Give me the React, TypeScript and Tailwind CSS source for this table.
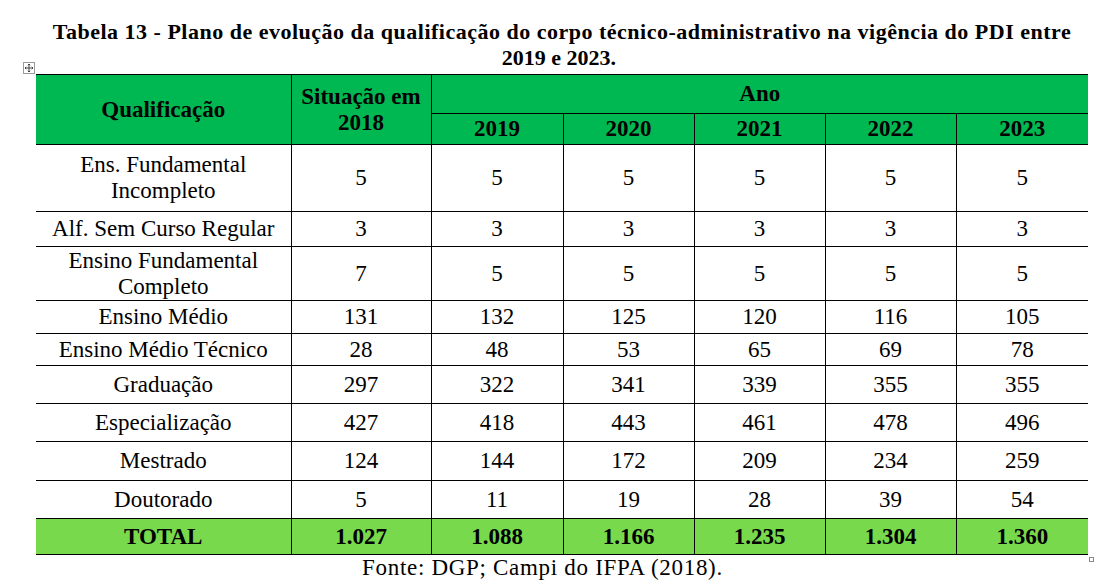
const rows: { label: string[]; values: number[]; h: string }[] = [
  { label: ["Ens. Fundamental", "Incompleto"], values: [5, 5, 5, 5, 5, 5], h: "h-[67px]" },
  { label: ["Alf. Sem Curso Regular"], values: [3, 3, 3, 3, 3, 3], h: "h-[35px]" },
  { label: ["Ensino Fundamental", "Completo"], values: [7, 5, 5, 5, 5, 5], h: "h-[54px]" },
  { label: ["Ensino Médio"], values: [131, 132, 125, 120, 116, 105], h: "h-[33px]" },
  { label: ["Ensino Médio Técnico"], values: [28, 48, 53, 65, 69, 78], h: "h-[32px]" },
  { label: ["Graduação"], values: [297, 322, 341, 339, 355, 355], h: "h-[38px]" },
  { label: ["Especialização"], values: [427, 418, 443, 461, 478, 496], h: "h-[38px]" },
  { label: ["Mestrado"], values: [124, 144, 172, 209, 234, 259], h: "h-[39px]" },
  { label: ["Doutorado"], values: [5, 11, 19, 28, 39, 54], h: "h-[38px]" },
];

const totals = ["1.027", "1.088", "1.166", "1.235", "1.304", "1.360"];
const years = [2019, 2020, 2021, 2022, 2023];

function MoveHandle() {
  return (
    <span className="absolute left-[-13px] top-[-12px] inline-grid h-[12px] w-[12px] place-items-center border border-[#9a9a9a] bg-white">
      <svg width="10" height="10" viewBox="0 0 10 10" fill="none" stroke="#333" strokeWidth="0.9">
        <path d="M5 1v8M1 5h8" />
        <path d="M3.8 2.2L5 1l1.2 1.2M3.8 7.8L5 9l1.2-1.2M2.2 3.8L1 5l1.2 1.2M7.8 3.8L9 5l-1.2 1.2" />
      </svg>
    </span>
  );
}

export default function App() {
  const cell = "border border-black p-0 text-center align-middle";
  return (
    <div
      className="relative h-[586px] w-[1115px] overflow-hidden bg-white text-black"
      style={{ fontFamily: '"Liberation Serif", "Times New Roman", serif' }}
    >
      <div className="w-[1124px] pt-[18px] text-center text-[22px] font-bold leading-[27px]">
        <div className="tracking-[0.5px]">
          Tabela 13 - Plano de evolução da qualificação do corpo técnico-administrativo na vigência do PDI entre
        </div>
        <div className="-mt-[1px] pr-[6px]">2019 e 2023.</div>
      </div>
      <div className="relative ml-[36px] mt-[3px] w-[1052px]">
        <MoveHandle />
        <table className="w-[1052px] table-fixed border-collapse border-x-0 text-[23px] leading-[26px]">
          <colgroup>
            <col className="w-[255px]" />
            <col className="w-[140px]" />
            <col className="w-[132px]" />
            <col className="w-[131px]" />
            <col className="w-[131px]" />
            <col className="w-[131px]" />
            <col className="w-[132px]" />
          </colgroup>
          <thead className="bg-[#00b852] font-bold">
            <tr className="h-[39px]">
              <th rowSpan={2} className={`${cell} border-l-0`}>
                Qualificação
              </th>
              <th rowSpan={2} className={cell}>
                Situação em
                <br />
                2018
              </th>
              <th colSpan={5} className={`${cell} border-r-0`}>
                Ano
              </th>
            </tr>
            <tr className="h-[31px]">
              {years.map((y, i) => (
                <th key={y} className={`${cell} ${i === years.length - 1 ? "border-r-0" : ""}`}>
                  {y}
                </th>
              ))}
            </tr>
          </thead>
          <tbody>
            {rows.map((r) => (
              <tr key={r.label.join(" ")} className={r.h}>
                <td className={`${cell} border-l-0`}>
                  {r.label.map((l, i) => (
                    <div key={i}>{l}</div>
                  ))}
                </td>
                {r.values.map((v, i) => (
                  <td key={i} className={`${cell} ${i === r.values.length - 1 ? "border-r-0" : ""}`}>
                    {v}
                  </td>
                ))}
              </tr>
            ))}
            <tr className="h-[36px] bg-[#79d94c] font-bold">
              <td className={`${cell} border-l-0`}>TOTAL</td>
              {totals.map((t, i) => (
                <td key={i} className={`${cell} ${i === totals.length - 1 ? "border-r-0" : ""}`}>
                  {t}
                </td>
              ))}
            </tr>
          </tbody>
        </table>
        <span className="absolute right-[-6px] bottom-[-7px] h-[5px] w-[5px] border border-[#8a8a8a] bg-white" />
      </div>
      <div className="ml-[362px] text-[23px] leading-[26px] tracking-[0.7px]">
        Fonte: DGP; Campi do IFPA (2018).
      </div>
    </div>
  );
}
